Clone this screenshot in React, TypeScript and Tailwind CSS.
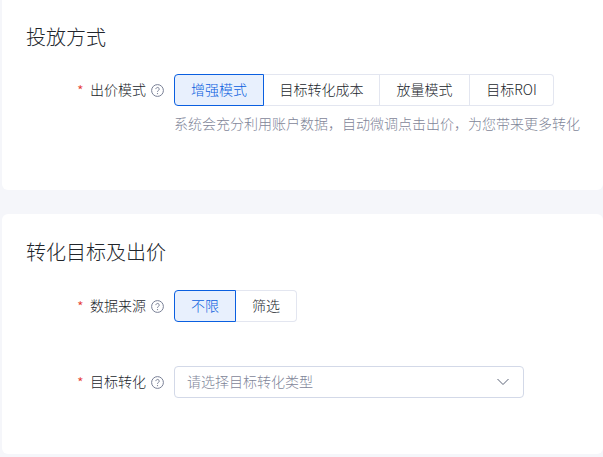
const FONT = `font-["Noto_Sans_CJK_SC","Noto_Sans",sans-serif] font-light`;

function HelpIcon() {
  return (
    <svg width="13" height="13" viewBox="0 0 13 13" fill="none" className="ml-[5px] shrink-0">
      <circle cx="6.5" cy="6.5" r="5.9" stroke="#787f95" strokeWidth="1" />
      <path d="M4.9 5.1a1.65 1.65 0 1 1 2.5 1.4c-.6.35-.9.65-.9 1.3" stroke="#787f95" strokeWidth="1" fill="none" />
      <circle cx="6.5" cy="9.6" r="0.65" fill="#787f95" />
    </svg>
  );
}

function FieldLabel({ text }: { text: string }) {
  return (
    <div className="flex w-[164px] shrink-0 items-center pl-[75px] h-8">
      <span className="w-[13px] text-[15px] leading-none text-[#e5352b]">*</span>
      <span className="-mt-[2px] text-[14px] leading-8 text-[#22262c]">{text}</span>
      <HelpIcon />
    </div>
  );
}

function Segment({ label, width, active, last }: { label: string; width: string; active?: boolean; last?: boolean }) {
  if (active) {
    return (
      <button className={`h-8 ${width} shrink-0 rounded-l-[4px] border border-[#0a5fe0] bg-[#e8f0fd] pb-[2px] text-[14px] text-[#0a5fe0]`}>
        {label}
      </button>
    );
  }
  return (
    <button
      className={`h-8 ${width} shrink-0 border-y border-r border-[#e3e6f0] bg-white pb-[2px] text-[14px] text-[#22262c] ${last ? "rounded-r-[4px]" : ""}`}
    >
      {label}
    </button>
  );
}

export default function App() {
  return (
    <div className={`h-[457px] w-[603px] overflow-hidden bg-[#f5f6fa] pl-[2px] ${FONT}`}>
      <section className="-mt-[10px] h-[200px] rounded-b-[6px] bg-white pl-[24px] pt-[32px]">
        <h2 className="h-[30px] text-[20px] leading-[30px] text-[#22262c]">投放方式</h2>
        <div className="-ml-[24px] mt-[22px] flex">
          <FieldLabel text="出价模式" />
          <div className="ml-[8px]">
            <div className="flex">
              <Segment label="增强模式" width="w-[90px]" active />
              <Segment label="目标转化成本" width="w-[116px]" />
              <Segment label="放量模式" width="w-[90px]" />
              <Segment label="目标ROI" width="w-[84px]" last />
            </div>
            <p className="mt-[7px] whitespace-nowrap text-[14px] leading-[20px] text-[#7f8699]">
              系统会充分利用账户数据，自动微调点击出价，为您带来更多转化
            </p>
          </div>
        </div>
      </section>

      <section className="mt-[24px] h-[240px] rounded-[6px] bg-white pl-[24px] pt-[23px]">
        <h2 className="h-[30px] text-[20px] leading-[30px] text-[#22262c]">转化目标及出价</h2>
        <div className="-ml-[24px] mt-[23px] flex">
          <FieldLabel text="数据来源" />
          <div className="ml-[8px] flex">
            <Segment label="不限" width="w-[62px]" active />
            <Segment label="筛选" width="w-[61px]" last />
          </div>
        </div>
        <div className="-ml-[24px] mt-[44px] flex">
          <FieldLabel text="目标转化" />
          <div className="ml-[8px] flex h-8 w-[350px] items-center justify-between rounded-[4px] border border-[#d3d9e8] bg-white pl-[12px] pr-[13px]">
            <span className="-mt-[2px] text-[14px] text-[#7f8699]">请选择目标转化类型</span>
            <svg width="14" height="8" viewBox="0 0 14 8" fill="none">
              <path d="M1.5 1l5.5 5.5L12.5 1" stroke="#5c6478" strokeWidth="1" />
            </svg>
          </div>
        </div>
      </section>
    </div>
  );
}
